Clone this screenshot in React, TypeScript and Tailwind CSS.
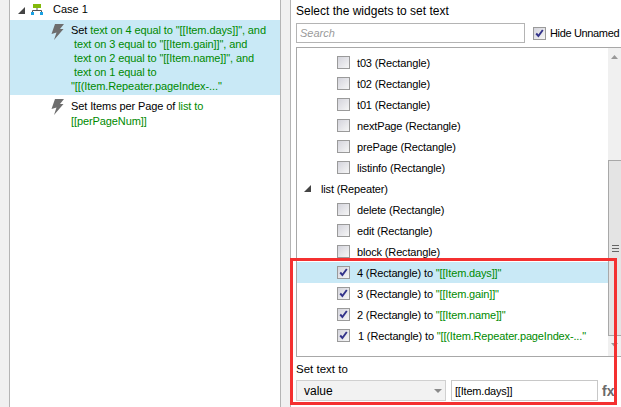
const FONT = "font-['Liberation_Sans',Arial,sans-serif]";

function Tri({ className = "" }: { className?: string }) {
  return (
    <svg width="7" height="7" viewBox="0 0 7 7" className={className}>
      <path d="M7 0V7H0Z" fill="#444" />
    </svg>
  );
}

function Bolt() {
  return (
    <svg width="13" height="16" viewBox="0 0 13 16" className="shrink-0">
      <path d="M4 0H13L9 5H12.5L3 16L5.5 8.5L0.5 10Z" fill="#6e6e6e" />
    </svg>
  );
}

function CaseIcon() {
  return (
    <svg width="12" height="11" viewBox="0 0 12 11" className="block shrink-0">
      <rect x="2" y="0" width="8" height="4" fill="#82b90a" />
      <path d="M6 4V6.5M1.5 8V6.5H10.5V8" fill="none" stroke="#555" strokeWidth="1" />
      <rect x="0" y="8" width="3" height="3" fill="#1ba1e2" />
      <rect x="9" y="8" width="3" height="3" fill="#1ba1e2" />
    </svg>
  );
}

function Check({ checked }: { checked?: boolean }) {
  return (
    <span className="relative flex h-[13px] w-[13px] shrink-0 items-center justify-center border border-[#9a9a9a] bg-gradient-to-br from-[#d4d4dc] to-[#f6f6f6]">
      {checked && (
        <svg width="9" height="9" viewBox="0 0 9 9">
          <path d="M1.2 4.5L3.4 7L7.8 1" fill="none" stroke="#33338a" strokeWidth="1.9" />
        </svg>
      )}
    </span>
  );
}

const G = ({ children }: { children: string }) => <span className="text-[#008a00]">{children}</span>;

function Row({ label, to, checked, active, dx = 0 }: { label: string; to?: string; checked?: boolean; active?: boolean; dx?: number }) {
  return (
    <div className={`flex h-[21px] items-center pl-[40px] ${active ? "bg-[#c9e9f6]" : ""}`}>
      <Check checked={checked} />
      <span className={dx ? "ml-[8px] whitespace-pre tracking-[-0.15px]" : "ml-[7px] whitespace-pre tracking-[-0.15px]"}>
        {label}
        {to && (
          <>
            {" to "}
            <G>{to}</G>
          </>
        )}
      </span>
    </div>
  );
}

export default function App() {
  return (
    <div className={`flex h-[407px] w-[621px] overflow-hidden bg-white text-[11px] leading-[14px] text-black ${FONT}`}>
      <div className="w-[10px] shrink-0 border-r border-[#b4b4b4] bg-[#f0f0f0]" />
      <div className="w-[270px] shrink-0">
        <div className="flex h-[20px] items-center pb-[2px] pl-[8px]">
          <Tri className="mt-[2px]" />
          <span className="ml-[6px]"><CaseIcon /></span>
          <span className="ml-[10px]">Case 1</span>
        </div>
        <div className="flex h-[75px] bg-[#c9e9f6] pl-[41px] pt-[3px]">
          <div className="pt-[1px]"><Bolt /></div>
          <div className="ml-[7px] whitespace-pre tracking-[-0.1px]">
            <div>Set <G>text on 4 equal to "[[Item.days]]", and</G></div>
            <div><G> text on 3 equal to "[[Item.gain]]", and</G></div>
            <div><G> text on 2 equal to "[[Item.name]]", and</G></div>
            <div><G> text on 1 equal to</G></div>
            <div><G>"[[(Item.Repeater.pageIndex-..."</G></div>
          </div>
        </div>
        <div className="flex pl-[41px] pt-[3px]">
          <div className="pt-[1px]"><Bolt /></div>
          <div className="ml-[7px] pt-[1px] leading-[15px] tracking-[-0.1px]">
            <div>Set Items per Page of <G>list to</G></div>
            <div><G>[[perPageNum]]</G></div>
          </div>
        </div>
      </div>
      <div className="w-[11px] shrink-0 border-x border-[#b4b4b4] bg-[#f0f0f0]" />
      <div className="relative flex min-w-0 flex-1 flex-col pl-[5px]">
        <div className="mt-[4px] h-[16px] text-[12px] leading-[14px]">Select the widgets to set text</div>
        <div className="mt-[3px] flex items-center">
          <div className="flex h-[20px] w-[229px] shrink-0 items-center border border-[#b4b4b4] pl-[3px] italic text-[#9a9a9a]">Search</div>
          <div className="ml-[8px]"><Check checked /></div>
          <span className="ml-[4px] whitespace-pre tracking-[-0.35px]">Hide Unnamed</span>
        </div>
        <div className="mt-[4px] flex h-[310px] border-y border-l border-[#a8a8a8]">
          <div className="flex-1 whitespace-pre pt-[4px]">
            <Row label="t03 (Rectangle)" />
            <Row label="t02 (Rectangle)" />
            <Row label="t01 (Rectangle)" />
            <Row label="nextPage (Rectangle)" />
            <Row label="prePage (Rectangle)" />
            <Row label="listinfo (Rectangle)" />
            <div className="flex h-[21px] items-center pl-[7px]">
              <Tri />
              <span className="ml-[10px] tracking-[-0.15px]">list (Repeater)</span>
            </div>
            <Row label="delete (Rectangle)" />
            <Row label="edit (Rectangle)" />
            <Row label="block (Rectangle)" />
            <Row label="4 (Rectangle)" to={'"[[Item.days]]"'} checked active />
            <Row label="3 (Rectangle)" to={'"[[Item.gain]]"'} checked />
            <Row label="2 (Rectangle)" to={'"[[Item.name]]"'} checked />
            <Row label="1 (Rectangle)" to={'"[[(Item.Repeater.pageIndex-..."'} checked dx={1} />
          </div>
          <div className="flex w-[13px] shrink-0 flex-col items-center bg-[#f0f0f0] pt-[7px]">
            <svg width="7" height="4" viewBox="0 0 7 4"><path d="M3.5 0L7 4H0Z" fill="#999" /></svg>
            <div className="mt-[101px] flex h-[176px] w-full flex-col items-center justify-center border border-r-0 border-[#a8a8a8] bg-[#e4e4e4]">
              <div className="h-[7px] w-[7px] border-y border-[#666] pt-[2px]"><div className="h-[1px] bg-[#666]" /></div>
            </div>
            <svg className="mt-[7px]" width="7" height="4" viewBox="0 0 7 4"><path d="M3.5 4L7 0H0Z" fill="#999" /></svg>
          </div>
        </div>
        <div className="mt-[5px] h-[16px] text-[11.5px]">Set text to</div>
        <div className="mt-[2px] flex items-center">
          <div className="flex h-[21px] w-[150px] shrink-0 items-center justify-between border border-[#d0d0d0] bg-[#f2f2f2] pl-[7px] pr-[3px]">
            <span className="text-[12px]">value</span>
            <svg width="8" height="4" viewBox="0 0 8 4"><path d="M0 0H8L4 4Z" fill="#8a8a8a" /></svg>
          </div>
          <div className="ml-[5px] flex h-[21px] w-[147px] shrink-0 items-center border border-[#c8c8c8] pl-[3px] tracking-[-0.2px]">[[Item.days]]</div>
          <span className="ml-[4px] text-[14px] font-bold text-[#6a6a6a]">fx</span>
        </div>
        <div className="absolute left-[-1px] top-[258px] h-[147px] w-[327px] border-[3px] border-[#f43030]" />
      </div>
    </div>
  );
}
